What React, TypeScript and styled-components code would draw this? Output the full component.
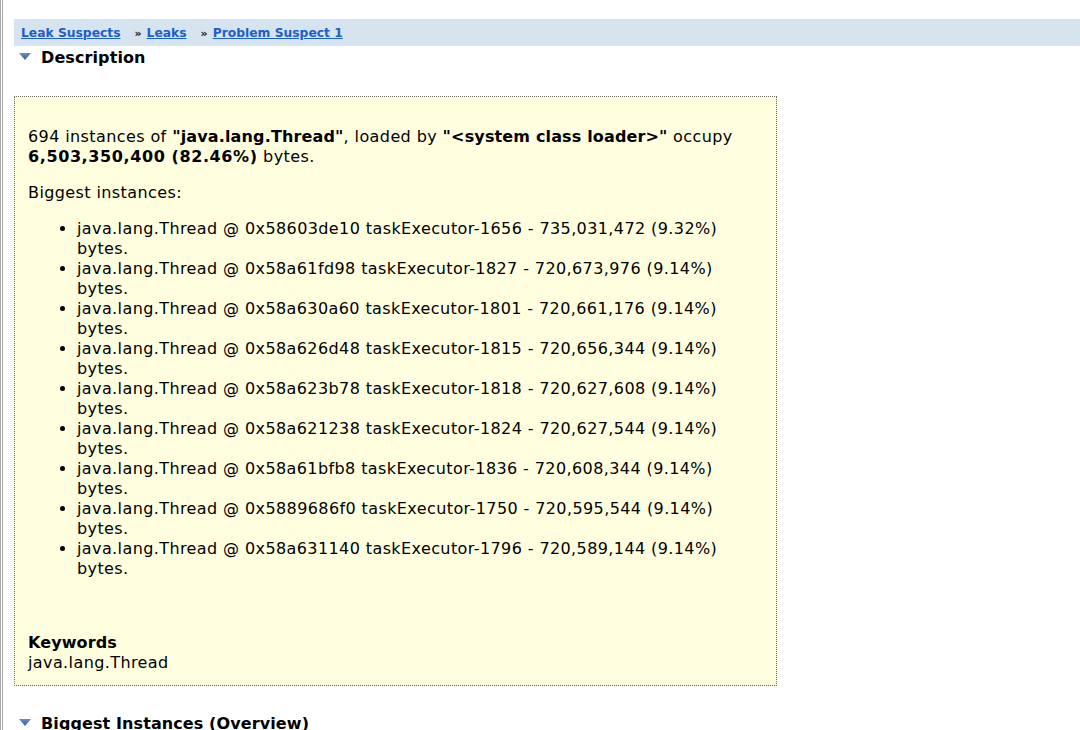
import React from "react";
import styled, { createGlobalStyle } from "styled-components";

const Global = createGlobalStyle`
  html, body { margin: 0; padding: 0; background: #fff; }
  body { font-family: "DejaVu Sans", Verdana, sans-serif; color: #000; }
`;

const Frame = styled.div`
  min-height: 730px;
  border-left: 3px double #a8a8a8;
  padding: 19px 0 0 11px;
  box-sizing: border-box;
  overflow: hidden;
`;

const Crumbs = styled.div`
  background: #d6e3f0;
  height: 27px;
  display: flex;
  align-items: center;
  padding-left: 7px;
  font-size: 12.3px;
  font-weight: bold;
  padding-top: 1px;
  box-sizing: border-box;
`;

const CrumbLink = styled.a`
  color: #1a5fcc;
  text-decoration: underline;
  cursor: pointer;
`;

const Sep = styled.span`
  font-size: 11px;
  margin: 0 5px 0 14px;
  color: #111;
`;

const Heading = styled.div<{ $gapBelow?: number }>`
  display: flex;
  align-items: center;
  gap: 10px;
  padding-left: 5px;
  font-size: 16px;
  letter-spacing: 0.1px;
  font-weight: bold;
  height: 22px;
  margin-bottom: ${(p) => p.$gapBelow ?? 0}px;
`;

const Triangle = () => (
  <svg width="12" height="8" viewBox="0 0 12 8">
    <defs>
      <linearGradient id="tg" x1="0" y1="0" x2="0" y2="1">
        <stop offset="0" stopColor="#6d8fbf" />
        <stop offset="1" stopColor="#2f5a98" />
      </linearGradient>
    </defs>
    <polygon points="0,0 12,0 6,7" fill="url(#tg)" />
  </svg>
);

const Box = styled.div`
  width: 763px;
  box-sizing: border-box;
  background: #ffffe0;
  border: 1px dotted #6a6a60;
  padding: 30px 13px 12px 13px;
  font-size: 16px;
  line-height: 20px;
  letter-spacing: 0.4px;
  margin-bottom: 26px;
`;

const Strong = styled.b<{ $wide?: boolean }>`
  letter-spacing: ${(p) => (p.$wide ? "0.6px" : "0.15px")};
`;

const Para = styled.p<{ $mb?: number }>`
  margin: 0 0 ${(p) => p.$mb ?? 16}px 0;
`;

const List = styled.ul`
  margin: 0 0 54px 0;
  padding-left: 49px;
  width: 660px;
  list-style: disc;
`;

const Item = styled.li`
  padding-left: 0;
`;

const Label = styled.div`
  font-weight: bold;
  letter-spacing: 0.1px;
`;

const items = [
  ["0x58603de10", "1656", "735,031,472", "9.32%"],
  ["0x58a61fd98", "1827", "720,673,976", "9.14%"],
  ["0x58a630a60", "1801", "720,661,176", "9.14%"],
  ["0x58a626d48", "1815", "720,656,344", "9.14%"],
  ["0x58a623b78", "1818", "720,627,608", "9.14%"],
  ["0x58a621238", "1824", "720,627,544", "9.14%"],
  ["0x58a61bfb8", "1836", "720,608,344", "9.14%"],
  ["0x5889686f0", "1750", "720,595,544", "9.14%"],
  ["0x58a631140", "1796", "720,589,144", "9.14%"],
];

export default function App() {
  return (
    <>
      <Global />
      <Frame>
        <Crumbs>
          <CrumbLink>Leak Suspects</CrumbLink>
          <Sep>»</Sep>
          <CrumbLink>Leaks</CrumbLink>
          <Sep>»</Sep>
          <CrumbLink>Problem Suspect 1</CrumbLink>
        </Crumbs>
        <Heading $gapBelow={28}>
          <Triangle />
          Description
        </Heading>
        <Box>
          <Para>
            694 instances of <Strong>"java.lang.Thread"</Strong>, loaded by{" "}
            <Strong>"&lt;system class loader&gt;"</Strong> occupy{" "}
            <Strong $wide>6,503,350,400 (82.46%)</Strong> bytes.
          </Para>
          <Para>Biggest instances:</Para>
          <List>
            {items.map(([addr, id, size, pct]) => (
              <Item key={addr}>
                java.lang.Thread @ {addr} taskExecutor-{id} - {size} ({pct}) bytes.
              </Item>
            ))}
          </List>
          <Label>Keywords</Label>
          <div>java.lang.Thread</div>
        </Box>
        <Heading>
          <Triangle />
          Biggest Instances (Overview)
        </Heading>
      </Frame>
    </>
  );
}
